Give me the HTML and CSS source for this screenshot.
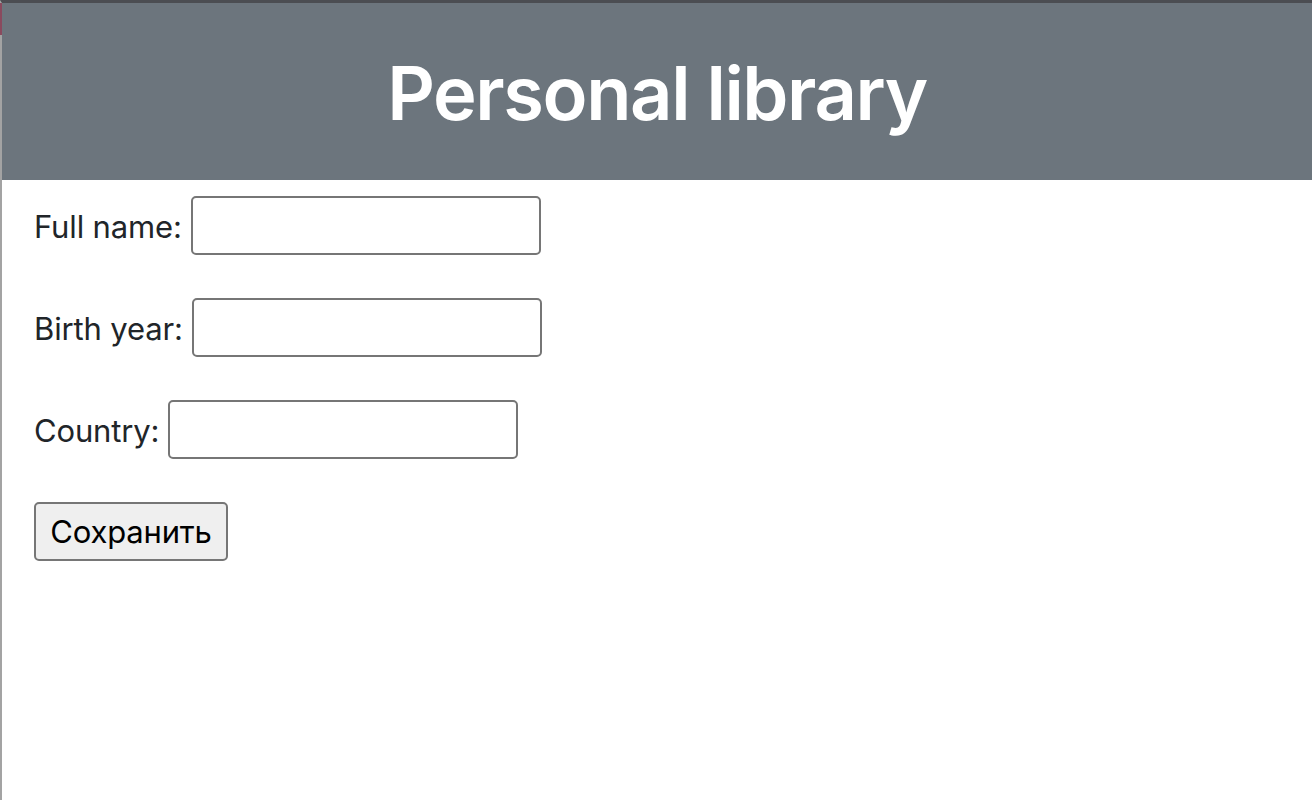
FILE: index.html
```html
<!DOCTYPE html>
<html lang="en">
<head>
<meta charset="utf-8">
<title>Personal library</title>
<link rel="stylesheet" href="styles.css">
</head>
<body>
<div class="frame">
  <div class="tab-mark"></div>
  <header class="header">
    <h1 class="title">Personal library</h1>
  </header>
  <form class="form">
    <div class="row">
      <label class="label" for="fullname">Full name:</label>
      <input class="field" id="fullname" type="text">
    </div>
    <div class="row">
      <label class="label" for="birth">Birth year:</label>
      <input class="field" id="birth" type="text">
    </div>
    <div class="row">
      <label class="label" for="country">Country:</label>
      <input class="field" id="country" type="text">
    </div>
    <div class="row">
      <button class="save" type="button">Сохранить</button>
    </div>
  </form>
</div>
</body>
</html>
```
FILE: styles.css
```css
html, body {
  margin: 0;
  padding: 0;
  height: 100%;
  background: #ffffff;
}

.frame {
  position: relative;
  box-sizing: border-box;
  min-height: 100%;
  border-top: 3px solid #4b4d52;
  border-left: 2px solid #a3a3a3;
  font-family: Inter, "Noto Sans", sans-serif;
  color: #212529;
}

.tab-mark {
  position: absolute;
  left: -2px;
  top: 0;
  width: 2px;
  height: 32px;
  background: #8a4a5e;
}

.header {
  height: 177px;
  background: #6c757d;
  display: flex;
  align-items: center;
  justify-content: center;
}

.title {
  margin: 0;
  color: #ffffff;
  font-size: 74px;
  font-weight: 600;
  letter-spacing: -1.4px;
  line-height: 1;
  padding-top: 2px;
}

.form {
  padding: 16px 0 0 32px;
}

.row {
  display: flex;
  align-items: center;
  height: 59px;
  margin-bottom: 43px;
  gap: 9px;
}

.label {
  font-size: 31px;
  letter-spacing: -0.15px;
  padding-top: 2px;
}

.field {
  box-sizing: border-box;
  width: 350px;
  height: 59px;
  margin: 0;
  border: 2px solid #767676;
  border-radius: 5px;
  background: #ffffff;
  font-size: 28px;
}

.save {
  box-sizing: border-box;
  height: 59px;
  width: 194px;
  margin: 0;
  padding: 0;
  border: 2px solid #767676;
  border-radius: 5px;
  background: #efefef;
  color: #000000;
  font-family: Inter, "Noto Sans", sans-serif;
  font-size: 31px;
  letter-spacing: -0.2px;
}
```
